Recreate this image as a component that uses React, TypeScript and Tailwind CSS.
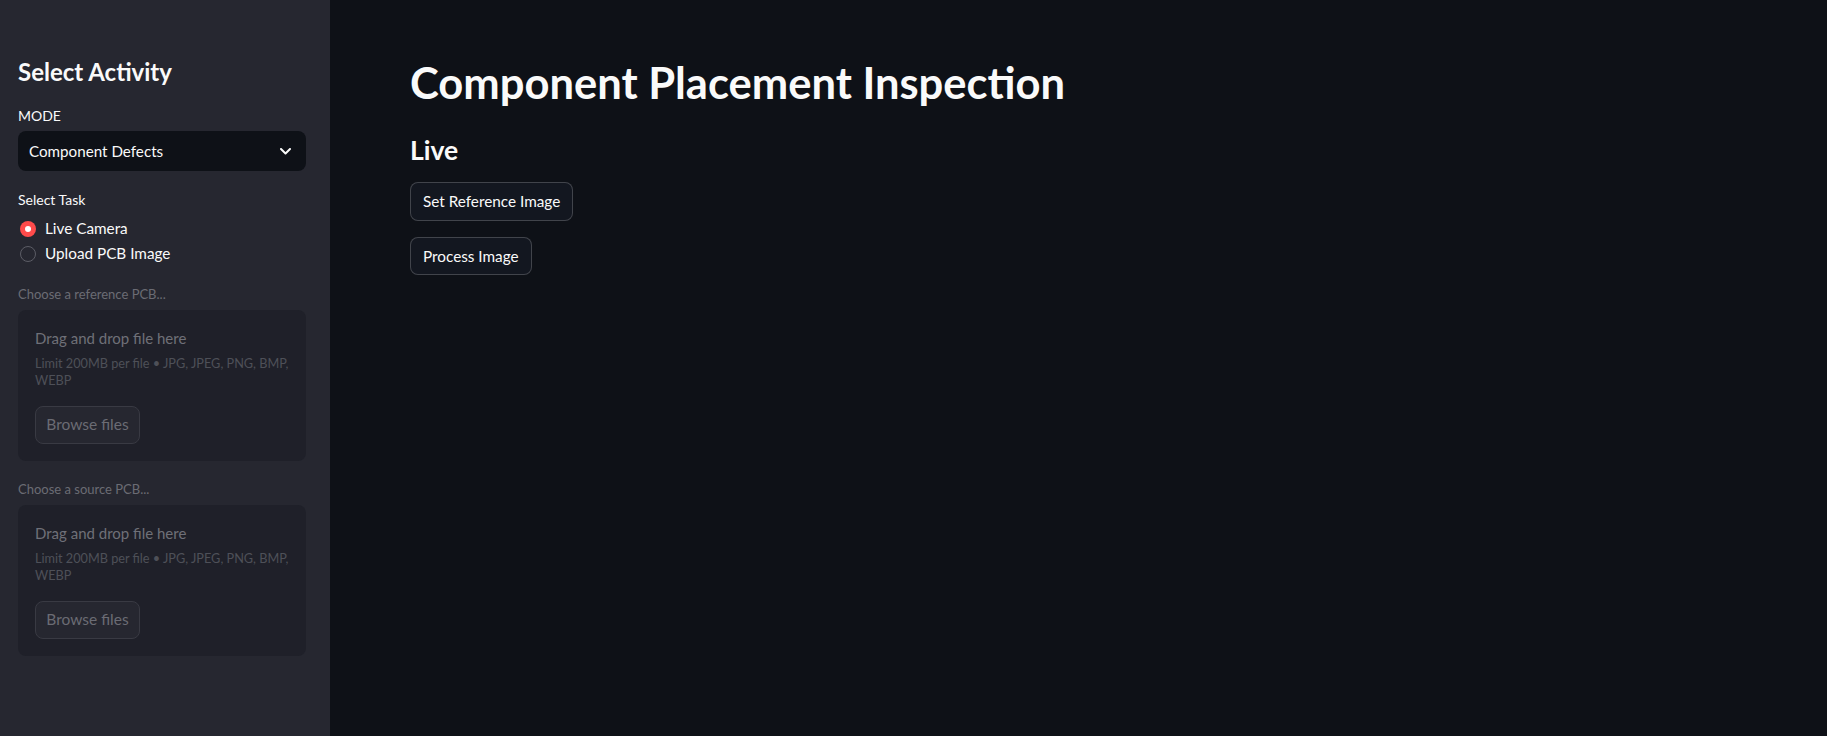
const font = { fontFamily: "Lato, 'Noto Sans', sans-serif" };

const Uploader = ({ label }: { label: string }) => (
  <div>
    <div className="mt-[18px] h-5 text-[13px] leading-5 text-[#6b6c74]">{label}</div>
    <div className="mt-[6px] h-[151px] rounded-lg bg-[#1f2029] px-[17px] pt-4">
      <div className="h-6 text-[15px] leading-6 text-[#6f7078]">Drag and drop file here</div>
      <div className="mt-[5px] text-[12.7px] leading-[17px] text-[#4e5058]">
        Limit 200MB per file • JPG, JPEG, PNG, BMP,
        <br />
        WEBP
      </div>
      <button
        type="button"
        disabled
        className="mt-[17px] h-[38px] w-[105px] rounded-lg border border-[#393a43] bg-[#262730] text-[15.5px] text-[#6b6c74]"
      >
        Browse files
      </button>
    </div>
  </div>
);

const Radio = ({ label, checked }: { label: string; checked?: boolean }) => (
  <div className="flex h-[25px] items-center gap-[9px] pl-[2px]">
    {checked ? (
      <span className="flex h-4 w-4 items-center justify-center rounded-full bg-[#ff4b4b]">
        <span className="h-[6px] w-[6px] rounded-full bg-white" />
      </span>
    ) : (
      <span className="h-4 w-4 rounded-full border-[1.5px] border-[#5c5d66]" />
    )}
    <span className="text-[15.3px] text-[#fafafa]">{label}</span>
  </div>
);

export default function App() {
  return (
    <div style={font} className="flex h-[736px] w-full overflow-hidden bg-[#0e1117]">
      <aside className="w-[330px] shrink-0 bg-[#262730] pl-[18px] pr-[24px] pt-[56px]">
        <h2 className="h-8 text-[24px] font-bold leading-8 text-[#fafafa]">Select Activity</h2>
        <div className="mt-[18px] h-5 text-[14px] leading-5 text-[#fafafa]">MODE</div>
        <div className="mt-[5px] flex h-10 items-center justify-between rounded-lg bg-[#0e1117] pl-[11px] pr-[15px]">
          <span className="text-[15.2px] text-[#fafafa]">Component Defects</span>
          <svg width="11" height="7" viewBox="0 0 11 7" fill="none">
            <polyline points="1,1 5.5,5.5 10,1" stroke="#fafafa" strokeWidth="2" strokeLinecap="round" strokeLinejoin="round" />
          </svg>
        </div>
        <div className="mt-[19px] h-5 text-[14px] leading-5 text-[#fafafa]">Select Task</div>
        <div className="mt-[6px]">
          <Radio label="Live Camera" checked />
          <Radio label="Upload PCB Image" />
        </div>
        <div className="mt-[1px]">
          <Uploader label="Choose a reference PCB..." />
        </div>
        <Uploader label="Choose a source PCB..." />
      </aside>

      <main className="flex-1 pl-[80px] pt-[56px]">
        <h1 className="h-[52px] text-[43.5px] font-bold leading-[52px] text-[#fafafa]">Component Placement Inspection</h1>
        <h3 className="mt-6 h-9 text-[26.5px] font-bold leading-9 text-[#fafafa]">Live</h3>
        <div className="mt-[14px] flex flex-col items-start gap-4">
          <button
            type="button"
            className="h-[39px] rounded-lg border border-[#fafafa33] bg-[#131720] px-3 text-[15.3px] text-[#fafafa]"
          >
            Set Reference Image
          </button>
          <button
            type="button"
            className="h-[38px] rounded-lg border border-[#fafafa33] bg-[#131720] px-3 text-[15.3px] text-[#fafafa]"
          >
            Process Image
          </button>
        </div>
      </main>
    </div>
  );
}
